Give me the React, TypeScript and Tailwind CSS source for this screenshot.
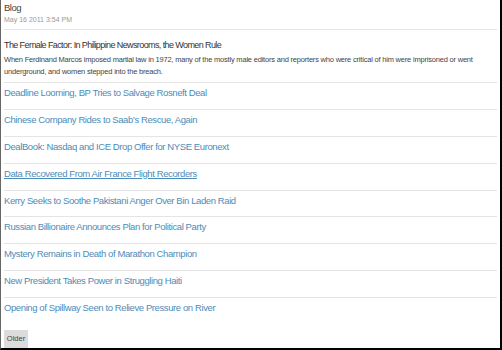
import React from "react";

const links = [
  "Deadline Looming, BP Tries to Salvage Rosneft Deal",
  "Chinese Company Rides to Saab’s Rescue, Again",
  "DealBook: Nasdaq and ICE Drop Offer for NYSE Euronext",
  "Data Recovered From Air France Flight Recorders",
  "Kerry Seeks to Soothe Pakistani Anger Over Bin Laden Raid",
  "Russian Billionaire Announces Plan for Political Party",
  "Mystery Remains in Death of Marathon Champion",
  "New President Takes Power in Struggling Haiti",
  "Opening of Spillway Seen to Relieve Pressure on River",
];

export default function App() {
  return (
    <div
      className="w-[502px] h-[350px] bg-white border-l border-l-[#666] border-r-2 border-b-2 border-black overflow-hidden"
      style={{ fontFamily: "'Liberation Sans', Arial, sans-serif" }}
    >
      <div className="px-[3px]">
        {/* Header */}
        <div className="pt-[2px] h-[30px] border-b border-[#e4e4e4]">
          <div className="text-[9.5px] leading-[12px] tracking-[-0.5px] text-[#444]">Blog</div>
          <div className="mt-[1px] text-[7px] leading-[10px] text-[#999]">May 16 2011 3:54 PM</div>
        </div>

        {/* Featured post */}
        <div className="pt-[8px] h-[52px]">
          <div className="text-[9px] leading-[14px] tracking-[-0.6px] text-[#333]">
            The Female Factor: In Philippine Newsrooms, the Women Rule
          </div>
          <p className="mt-[2px] text-[7.5px] leading-[12px] tracking-[-0.2px] text-[#444]">
            When Ferdinand Marcos imposed martial law in 1972, many of the mostly male editors and reporters who were critical of him were imprisoned or went underground, and women stepped into the breach.
          </p>
        </div>

        {/* Links */}
        <ul>
          {links.map((l, i) => (
            <li
              key={l}
              className="h-[26.9px] pt-[4px] border-t border-[#e4e4e4] text-[9.5px] leading-[12px] tracking-[-0.4px]"
            >
              <a href="#" className={`text-[#4d8cb9] ${i === 3 ? "underline" : ""}`}>
                {l}
              </a>
            </li>
          ))}
        </ul>

        <button className="mt-[4px] w-[24px] h-[18px] bg-[#dcdcdc] text-[7.5px] text-[#444]">Older</button>
      </div>
    </div>
  );
}
